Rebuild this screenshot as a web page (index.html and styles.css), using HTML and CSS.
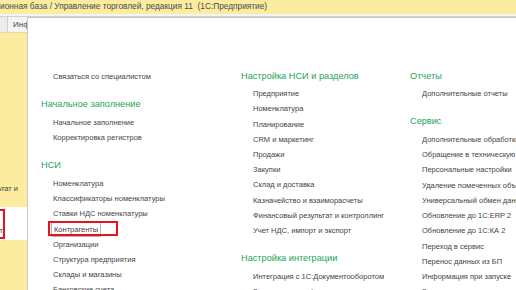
FILE: index.html
```html
<!DOCTYPE html>
<html lang="ru">
<head>
 <meta charset="utf-8">
 <title>Управление торговлей</title>
 <link rel="stylesheet" href="styles.css">
</head>
<body>

 <div class="titlebar">ионная база / Управление торговлей, редакция 11&nbsp; (1С:Предприятие)</div>

 <div class="workspace">
 <div class="tabstrip">
 <div class="tab-stub"></div>
 <div class="tab tab-first">Информация</div>
 <div class="tab tab-second"></div>
 <div class="tab"></div>
 </div>

 <div class="sidebar">
 <div class="side-block">
 <div class="side-label">Финансовый результат и</div>
 </div>
 <div class="side-current">
 <div class="side-mark"><span>Контрагент</span></div>
 </div>
 <div class="side-rest"></div>
 </div>

 <!-- all-functions panel lies over tabs and sidebar -->
 <div class="panel">
 <div class="col">
 <div class="group group-plain">
 <div class="item">Связаться со специалистом</div>
 </div>
 <div class="group">
 <div class="group-title">Начальное заполнение</div>
 <div class="item">Начальное заполнение</div>
 <div class="item">Корректировка регистров</div>
 </div>
 <div class="group">
 <div class="group-title">НСИ</div>
 <div class="item">Номенклатура</div>
 <div class="item">Классификаторы номенклатуры</div>
 <div class="item">Ставки НДС номенклатуры</div>
 <div class="item"><span class="focused">Контрагенты</span></div>
 <div class="item">Организации</div>
 <div class="item">Структура предприятия</div>
 <div class="item">Склады и магазины</div>
 <div class="item">Банковские счета</div>
 </div>
 </div>

 <div class="col">
 <div class="group">
 <div class="group-title">Настройка НСИ и разделов</div>
 <div class="item">Предприятие</div>
 <div class="item">Номенклатура</div>
 <div class="item">Планирование</div>
 <div class="item">CRM и маркетинг</div>
 <div class="item">Продажи</div>
 <div class="item">Закупки</div>
 <div class="item">Склад и доставка</div>
 <div class="item">Казначейство и взаиморасчеты</div>
 <div class="item">Финансовый результат и контроллинг</div>
 <div class="item">Учет НДС, импорт и экспорт</div>
 </div>
 <div class="group">
 <div class="group-title">Настройка интеграции</div>
 <div class="item">Интеграция с 1С:Документооборотом</div>
 <div class="item">Загрузка классификаторов</div>
 </div>
 </div>

 <div class="col">
 <div class="group">
 <div class="group-title">Отчеты</div>
 <div class="item">Дополнительные отчеты</div>
 </div>
 <div class="group">
 <div class="group-title">Сервис</div>
 <div class="item">Дополнительные обработки</div>
 <div class="item">Обращение в техническую поддержку</div>
 <div class="item">Персональные настройки</div>
 <div class="item">Удаление помеченных объектов</div>
 <div class="item">Универсальный обмен данными</div>
 <div class="item">Обновление до 1С:ERP 2</div>
 <div class="item">Обновление до 1С:КА 2</div>
 <div class="item">Переход в сервис</div>
 <div class="item">Перенос данных из БП</div>
 <div class="item">Информация при запуске</div>
 <div class="item">Загрузка курсов валют</div>
 </div>
 </div>
 </div>
 </div>

</body>
</html>
```

FILE: styles.css
```css
body {
 margin: 0;
 width: 516px;
 height: 290px;
 overflow: hidden;
 font-family: "Liberation Sans", Arial, sans-serif;
 background: #fff;
}

.titlebar {
 height: 14px;
 line-height: 13px;
 background: #fbeca0;
 color: #4a4a4a;
 font-size: 8.3px;
 white-space: nowrap;
 overflow: hidden;
}

.workspace {
 position: relative;
 height: 276px;
 display: flex;
 flex-direction: column;
}

.tabstrip {
 height: 19px;
 box-sizing: border-box;
 display: flex;
 background: #ececec;
 border-top: 2px solid #f4f4f4;
 border-bottom: 1px solid #e3dcae;
}

.tab-stub {
 width: 7px;
 border-right: 1px solid #cfcfcf;
 border-top: 1px solid #d2d2d2;
}

.tab {
 border-top: 1px solid #d2d2d2;
 border-right: 1px solid #c8c8c8;
 background: #f4f4f4;
 font-size: 8px;
 color: #444;
 line-height: 15px;
 padding-left: 5px;
 white-space: nowrap;
 overflow: hidden;
 flex: 1;
}

.tab-first { flex: 0 0 58px; }
.tab-second { flex: 0 0 272px; }

.sidebar {
 flex: 1;
 width: 27px;
 display: flex;
 flex-direction: column;
 background: #fbeca0;
}

.side-block {
 height: 174px;
 display: flex;
 flex-direction: column;
 justify-content: flex-end;
}

.side-label {
 display: flex;
 justify-content: flex-end;
 padding-right: 9px;
 margin-bottom: 14px;
 overflow: hidden;
 white-space: nowrap;
 font-size: 7.5px;
 color: #444;
}

.side-current {
 height: 33px;
 background: #fff;
 overflow: hidden;
}

.side-mark {
 width: 60px;
 height: 24px;
 margin: 2px 0 0 -59px;
 border: 2px solid #e8141b;
 display: flex;
 justify-content: flex-end;
 align-items: flex-end;
 padding-bottom: 2px;
 font-size: 7.5px;
 color: #444;
}

.side-rest { flex: 1; }

.panel {
 position: absolute;
 left: 27px;
 top: 3px;
 right: 0;
 bottom: 0;
 border-left: 1px solid #c9c9c9;
 border-top: 1px solid #c4c4c4;
 background: #fff;
 padding: 49.5px 0 0 13px;
 display: grid;
 grid-template-columns: 200px 169px 1fr;
 align-items: start;
 overflow: hidden;
}

.group { margin-bottom: 12.2px; }

.group-plain { padding-top: 1.4px; }

.group-title {
 font-size: 9.2px;
 line-height: 16px;
 color: #22a35a;
 margin-bottom: 2.6px;
 white-space: nowrap;
}

.item {
 font-size: 7.5px;
 line-height: 15.2px;
 padding-left: 12px;
 color: #444;
 white-space: nowrap;
}

.focused {
 position: relative;
 padding: 2px;
 margin-left: -2px;
 border: 1px solid #b4b4b4;
}

/* red annotation frame */
.focused::after {
 content: "";
 position: absolute;
 left: -4.3px;
 top: -2px;
 width: 66px;
 height: 11px;
 border: 2px solid #e8141b;
}
```
